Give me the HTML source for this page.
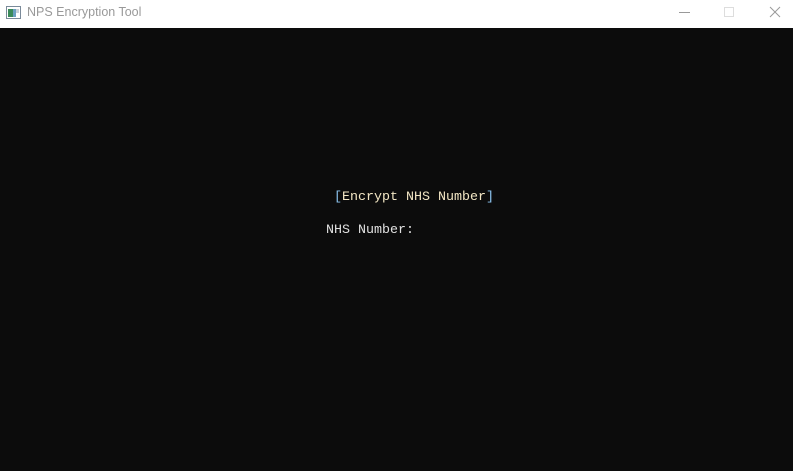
<!DOCTYPE html>
<html><head><style>
html,body{margin:0;padding:0;width:793px;height:471px;overflow:hidden;background:#0c0c0c;}
.tb{position:absolute;left:0;top:0;width:793px;height:28px;background:#fff;}
.title{position:absolute;left:27px;top:5px;font:12.5px "Liberation Sans",sans-serif;color:#999;}
.t{position:absolute;font:13.33px "Liberation Mono",monospace;white-space:pre;line-height:16px;}
</style></head><body>
<div class="tb">
<svg style="position:absolute;left:6px;top:6px" width="16" height="14" viewBox="0 0 16 14">
<rect x="0.5" y="0.5" width="14" height="12" fill="#fff" stroke="#7a8a9a"/>
<rect x="2" y="3" width="5" height="8" fill="#3a8a5a"/>
<rect x="7" y="3" width="3" height="8" fill="#6aa0c0"/>
<rect x="10" y="3" width="3" height="4" fill="#c8d0d8"/>
</svg>
<div class="title">NPS Encryption Tool</div>
<svg style="position:absolute;left:660px;top:0" width="133" height="28">
<line x1="19" y1="12.5" x2="30" y2="12.5" stroke="#999" stroke-width="1"/>
<rect x="64.5" y="7.5" width="9" height="9" fill="none" stroke="#ddd"/>
<line x1="110" y1="7" x2="120" y2="17" stroke="#999"/>
<line x1="120" y1="7" x2="110" y2="17" stroke="#999"/>
</svg>
</div>
<div class="t" style="left:334px;top:190px;color:#f2e6c4"><span style="color:#8cc4f0">[</span>Encrypt NHS Number<span style="color:#8cc4f0">]</span></div>
<div class="t" style="left:326px;top:223px;color:#e0e0e0">NHS Number:</div>
</body></html>
